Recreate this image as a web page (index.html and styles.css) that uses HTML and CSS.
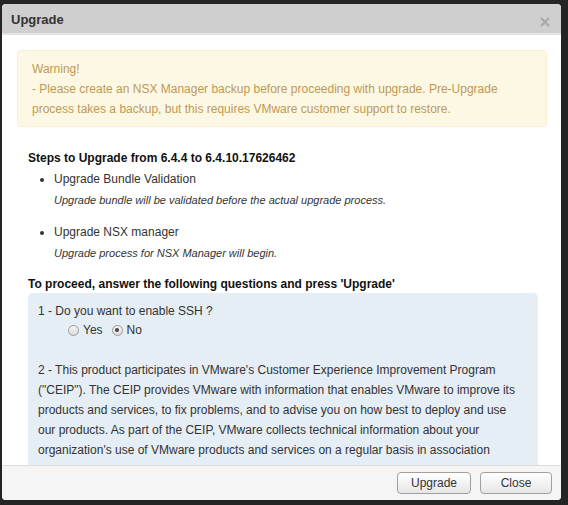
FILE: index.html
```html
<!DOCTYPE html>
<html>
<head>
<meta charset="utf-8">
<link rel="stylesheet" href="styles.css">
</head>
<body>
<div class="dialog">
  <div class="dlg-header">
    <span class="dlg-title">Upgrade</span>
    <svg class="dlg-close" width="10" height="10" viewBox="0 0 10 10"><path d="M1 1 L9 9 M9 1 L1 9" stroke="#a9a9a9" stroke-width="2.2" fill="none"/></svg>
  </div>
  <div class="dlg-body">
    <div class="warning">
      <div>Warning!</div>
      <div>- Please create an NSX Manager backup before proceeding with upgrade. Pre-Upgrade process takes a backup, but this requires VMware customer support to restore.</div>
    </div>
    <div class="section">
      <div class="heading">Steps to Upgrade from 6.4.4 to 6.4.10.17626462</div>
      <ul class="steps">
        <li>
          <div class="step-title">Upgrade Bundle Validation</div>
          <div class="step-desc">Upgrade bundle will be validated before the actual upgrade process.</div>
        </li>
        <li>
          <div class="step-title">Upgrade NSX manager</div>
          <div class="step-desc">Upgrade process for NSX Manager will begin.</div>
        </li>
      </ul>
      <div class="heading heading-q">To proceed, answer the following questions and press 'Upgrade'</div>
      <div class="questions">
        <div class="q">1 - Do you want to enable SSH ?</div>
        <div class="radios">
          <label class="radio"><span class="rb"></span>Yes</label>
          <label class="radio"><span class="rb rb-on"></span>No</label>
        </div>
        <div class="q q2">2 - This product participates in VMware's Customer Experience Improvement Program ("CEIP"). The CEIP provides VMware with information that enables VMware to improve its products and services, to fix problems, and to advise you on how best to deploy and use our products. As part of the CEIP, VMware collects technical information about your organization's use of VMware products and services on a regular basis in association<br>with your organization's VMware license key(s).</div>
      </div>
    </div>
  </div>
  <div class="dlg-footer">
    <button class="btn btn-upgrade">Upgrade</button>
    <button class="btn btn-close">Close</button>
  </div>
</div>
</body>
</html>
```

FILE: styles.css
```css
html, body {
  margin: 0;
  padding: 0;
  background: #242424;
  width: 568px;
  height: 505px;
  overflow: hidden;
  font-family: "Liberation Sans", Arial, sans-serif;
  font-size: 12px;
  color: #333;
}

.dialog {
  margin: 4px 0 0 2px;
  width: 559px;
  height: 496px;
  background: #fff;
  border-radius: 4px;
  display: flex;
  flex-direction: column;
  overflow: hidden;
}

.dlg-header {
  height: 29px;
  flex: none;
  background: #cfcfcf;
  border-bottom: 2px solid #e4e4e4;
  display: flex;
  align-items: center;
  justify-content: space-between;
  padding: 0 11px 0 9px;
}

.dlg-title {
  font-weight: bold;
  font-size: 13px;
  color: #333;
  padding-top: 1px;
}

.dlg-close {
  display: block;
  margin-top: 7px;
}

.dlg-body {
  flex: 1;
  overflow: hidden;
  padding: 15px 14px 0 15px;
}

.warning {
  background: #fcf8e3;
  border: 1px solid #fbeed5;
  border-radius: 4px;
  color: #c09853;
  line-height: 20px;
  padding: 8px 14px 7px 14px;
}

.section {
  padding: 22px 9px 0 11px;
}

.heading {
  font-weight: bold;
  line-height: 18px;
  color: #111;
}

.steps {
  margin: 0;
  padding: 2px 0 0 26px;
  list-style: disc;
}

.steps li {
  margin-bottom: 11px;
}

.step-title {
  line-height: 20px;
}

.step-desc {
  font-style: italic;
  font-size: 11px;
  line-height: 22px;
}

.heading-q {
  margin-top: 0;
}

.questions {
  margin-top: 0;
  background: #e5edf5;
  border-radius: 5px 5px 0 0;
  padding: 8px 19px 10px 10px;
  line-height: 20px;
}

.radios {
  display: flex;
  padding-left: 30px;
  gap: 9px;
  height: 18px;
  align-items: center;
}

.radio {
  display: flex;
  align-items: center;
  gap: 4px;
}

.rb {
  width: 11px;
  height: 11px;
  border-radius: 50%;
  border: 1px solid #9a9a9a;
  background: linear-gradient(#f4f4f4, #dcdcdc);
  position: relative;
  box-sizing: border-box;
  display: inline-block;
}

.rb-on::after {
  content: "";
  position: absolute;
  left: 2.5px;
  top: 2.5px;
  width: 4px;
  height: 4px;
  border-radius: 50%;
  background: #444;
}

.q2 {
  margin-top: 21px;
}

.dlg-footer {
  flex: none;
  border-top: 1px solid #dcdcdc;
  background: #f5f5f5;
  display: flex;
  justify-content: flex-end;
  align-items: flex-start;
  gap: 9px;
  padding: 6px 9px 0 0;
  box-sizing: border-box;
  height: 35px;
}

.btn {
  font-family: "Liberation Sans", Arial, sans-serif;
  font-size: 12px;
  color: #333;
  height: 22px;
  border: 1px solid #a0a0a0;
  border-radius: 4px;
  background: linear-gradient(#ffffff, #e6e6e6);
  padding: 0;
}

.btn-upgrade { width: 74px; }
.btn-close { width: 72px; }
```
